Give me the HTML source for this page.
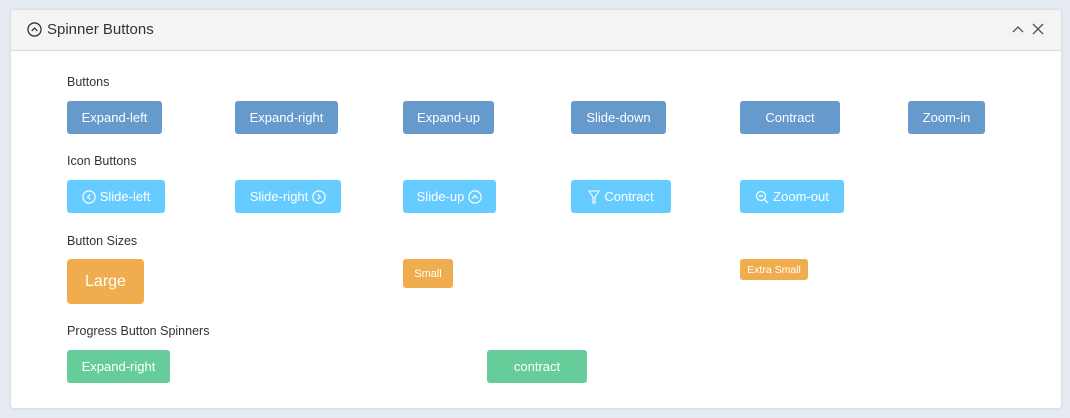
<!DOCTYPE html>
<html><head><style>
body{margin:0;width:1070px;height:418px;background:#e6ebf1;font-family:"Liberation Sans",sans-serif;position:relative;overflow:hidden}
.panel{position:absolute;left:11px;top:10px;width:1050px;height:398px;background:#fff;border-radius:3px;box-shadow:0 0 3px rgba(0,0,0,.12)}
.hd{position:absolute;left:0;top:0;right:0;height:40px;background:#f4f4f4;border-bottom:1px solid #dcdcdc;border-radius:3px 3px 0 0}
.hd .t{position:absolute;left:36px;top:11px;font-size:15px;color:#333}
.lbl{position:absolute;font-size:12.5px;color:#333;left:56px}
.b{position:absolute;color:#fff;font-size:13px;border-radius:3px;display:flex;align-items:center;justify-content:center;gap:4px;white-space:nowrap}
.p{background:#6699cc;top:91px;height:33px}
.i{background:#66ccff;top:170px;height:33px}
.o{background:#f0ad4e}
.g{background:#66cc99;top:340px;height:33px}
</style></head><body>
<div class="panel">
<div class="hd">
<svg style="position:absolute;left:16px;top:12px" width="15" height="15" viewBox="0 0 16 16"><circle cx="8" cy="8" r="7" fill="none" stroke="#333" stroke-width="1.4"/><path d="M5 9.5L8 6.5L11 9.5" fill="none" stroke="#333" stroke-width="1.4"/></svg>
<div class="t">Spinner Buttons</div>
<svg style="position:absolute;left:1001px;top:15px" width="12" height="8" viewBox="0 0 12 8"><path d="M1 7L6 2L11 7" fill="none" stroke="#456" stroke-width="1.3"/></svg>
<svg style="position:absolute;left:1021px;top:13px" width="12" height="12" viewBox="0 0 12 12"><path d="M1 1L11 11M11 1L1 11" fill="none" stroke="#456" stroke-width="1.3"/></svg>
</div>
<div class="lbl" style="top:65px">Buttons</div>
<div class="b p" style="left:56px;width:95px">Expand-left</div>
<div class="b p" style="left:224px;width:103px">Expand-right</div>
<div class="b p" style="left:392px;width:91px">Expand-up</div>
<div class="b p" style="left:560px;width:95px">Slide-down</div>
<div class="b p" style="left:729px;width:100px">Contract</div>
<div class="b p" style="left:897px;width:77px">Zoom-in</div>
<div class="lbl" style="top:144px">Icon Buttons</div>
<div class="b i" style="left:56px;width:98px"><svg width="14" height="14" viewBox="0 0 16 16"><circle cx="8" cy="8" r="7" fill="none" stroke="#fff" stroke-width="1.3"/><path d="M9.5 5L6.5 8L9.5 11" fill="none" stroke="#fff" stroke-width="1.3"/></svg>Slide-left</div>
<div class="b i" style="left:224px;width:106px">Slide-right<svg width="14" height="14" viewBox="0 0 16 16"><circle cx="8" cy="8" r="7" fill="none" stroke="#fff" stroke-width="1.3"/><path d="M6.5 5L9.5 8L6.5 11" fill="none" stroke="#fff" stroke-width="1.3"/></svg></div>
<div class="b i" style="left:392px;width:93px">Slide-up<svg width="14" height="14" viewBox="0 0 16 16"><circle cx="8" cy="8" r="7" fill="none" stroke="#fff" stroke-width="1.3"/><path d="M5 9.5L8 6.5L11 9.5" fill="none" stroke="#fff" stroke-width="1.3"/></svg></div>
<div class="b i" style="left:560px;width:100px"><svg width="12" height="14" viewBox="0 0 12 14"><path d="M1 1H11L7 7V13H5V7Z" fill="none" stroke="#fff" stroke-width="1.1"/></svg>Contract</div>
<div class="b i" style="left:729px;width:104px"><svg width="14" height="14" viewBox="0 0 14 14"><circle cx="6" cy="6" r="4.5" fill="none" stroke="#fff" stroke-width="1.2"/><path d="M4 6H8M9.3 9.3L13 13" fill="none" stroke="#fff" stroke-width="1.2"/></svg>Zoom-out</div>
<div class="lbl" style="top:224px">Button Sizes</div>
<div class="b o" style="left:56px;top:249px;width:77px;height:45px;font-size:16px;border-radius:4px">Large</div>
<div class="b o" style="left:392px;top:249px;width:50px;height:29px;font-size:11px">Small</div>
<div class="b o" style="left:729px;top:249px;width:68px;height:21px;font-size:10.5px">Extra Small</div>
<div class="lbl" style="top:314px">Progress Button Spinners</div>
<div class="b g" style="left:56px;width:103px">Expand-right</div>
<div class="b g" style="left:476px;width:100px">contract</div>
</div>
</body></html>
